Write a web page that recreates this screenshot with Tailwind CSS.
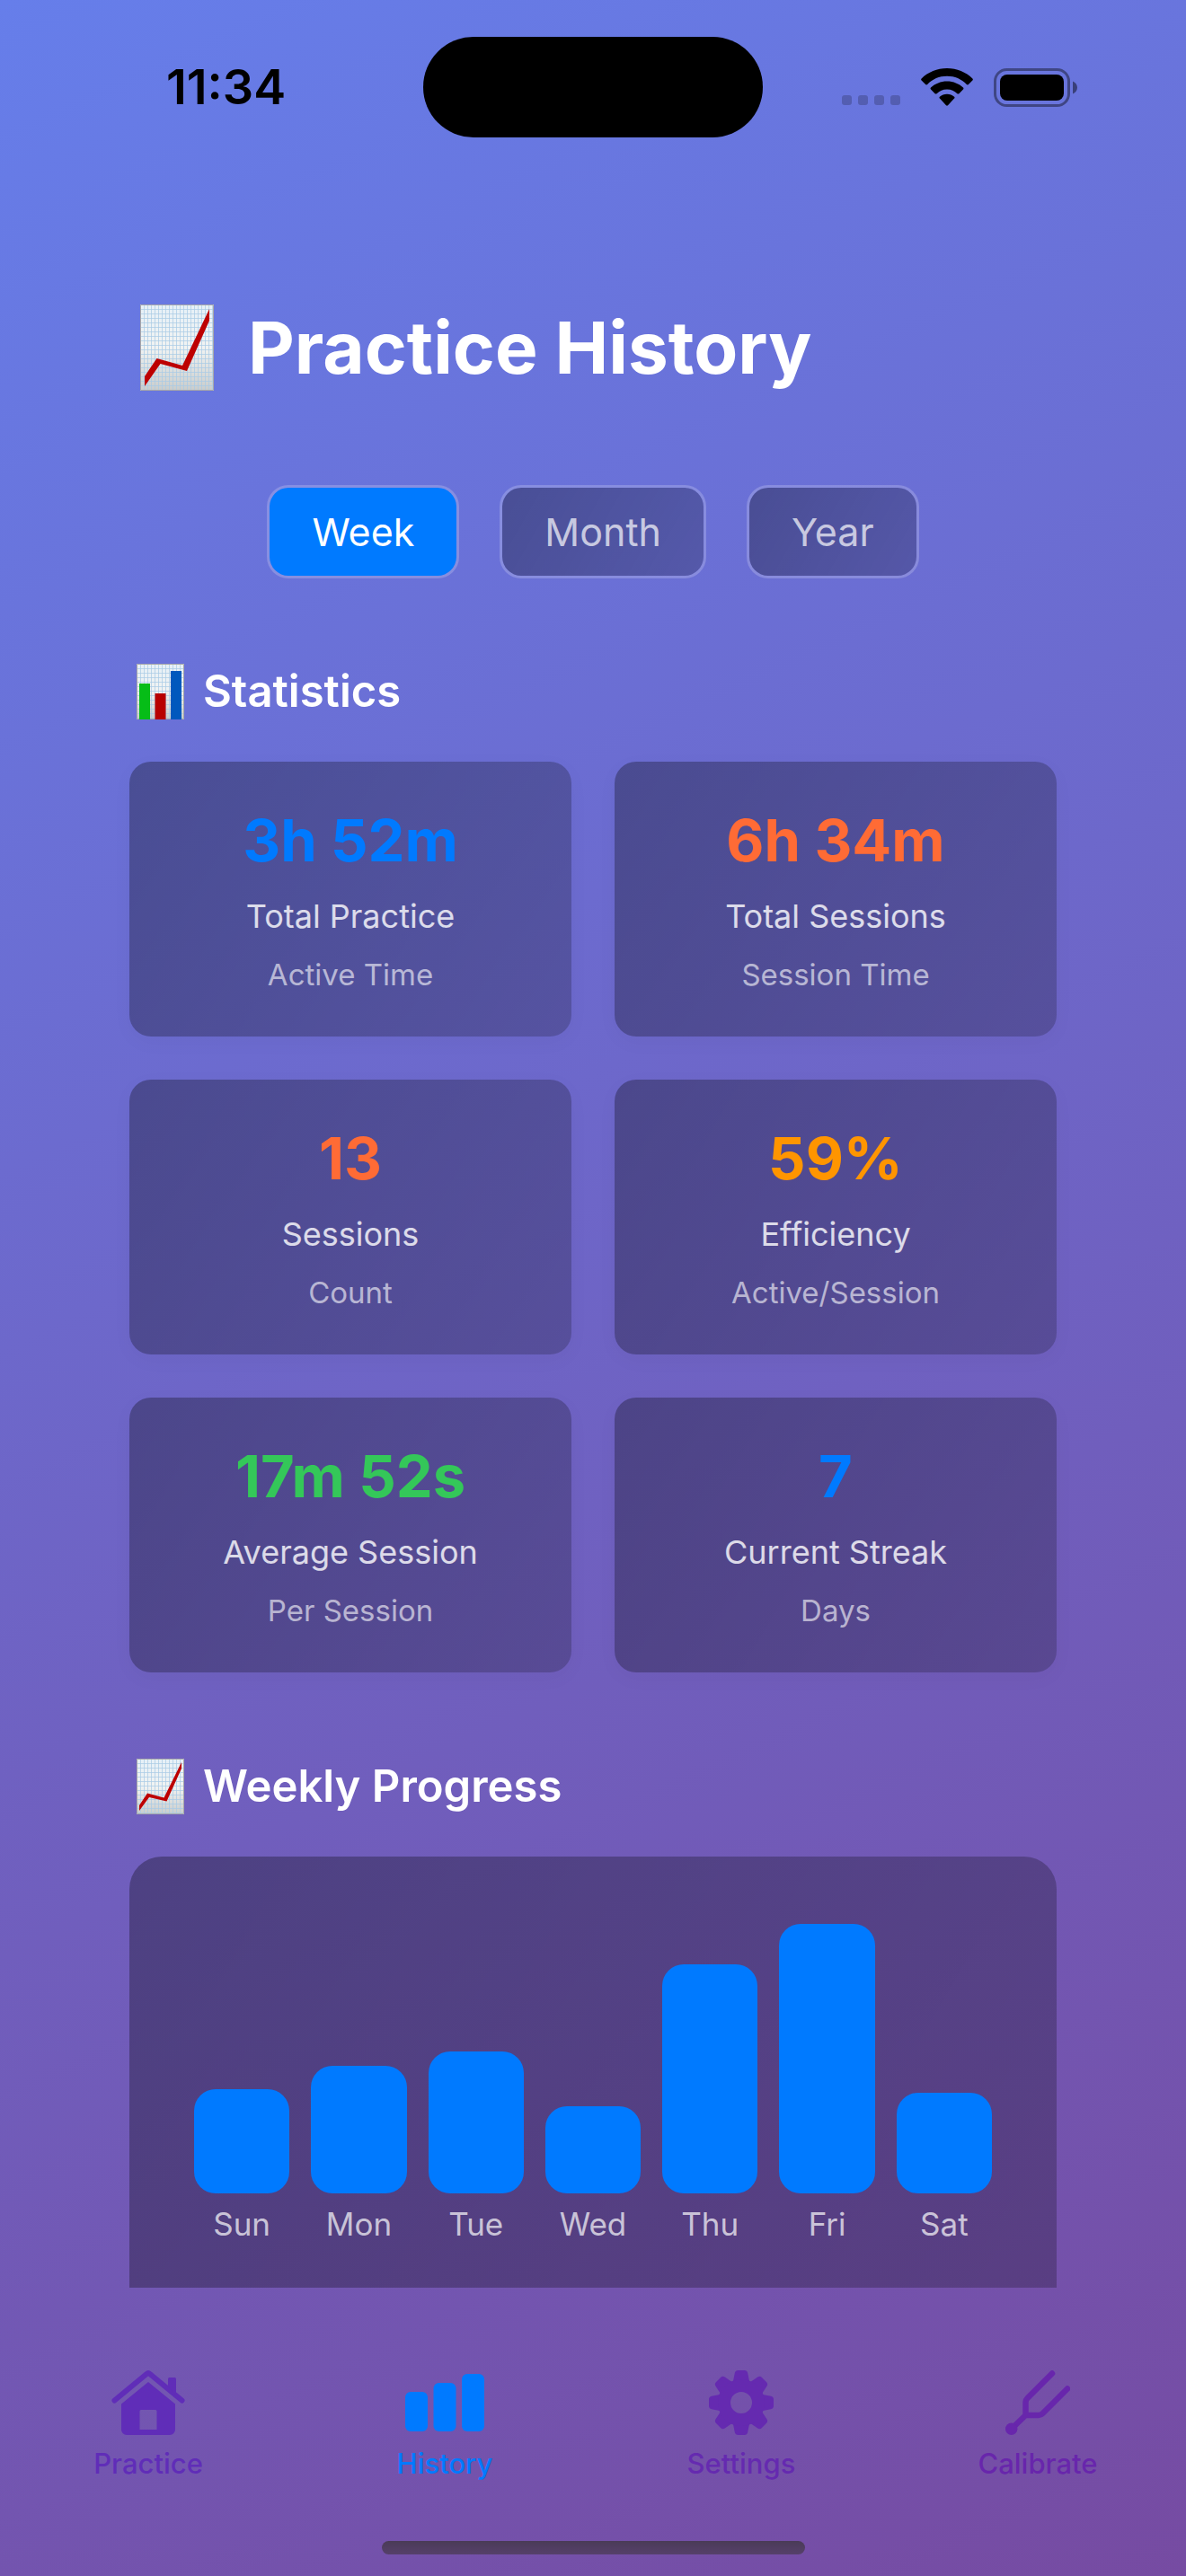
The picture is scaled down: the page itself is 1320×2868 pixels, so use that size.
<!DOCTYPE html>
<html lang="en">
<head>
<meta charset="utf-8">
<meta name="viewport" content="width=device-width, initial-scale=1">
<title>Practice History</title>
<script src="https://cdn.jsdelivr.net/npm/@tailwindcss/browser@4"></script>
</head>
<body class="font-['Inter',sans-serif] text-white">
<div class="flex min-h-screen flex-col bg-[linear-gradient(155deg,#667eea,#764ba2)]">

  <!-- Status bar -->
  <header class="grid h-[204px] grid-cols-[1fr_auto_1fr] items-start pt-[41px] text-black">
    <div class="flex h-[112px] items-center justify-center pl-8 text-[54px] leading-[64px] font-semibold">11:34</div>
    <div class="h-[112px] w-[378px] rounded-full bg-black"></div>
    <div class="flex h-[112px] items-center justify-end gap-[23px] pr-[121px]">
      <div class="flex gap-[7px] pt-7">
        <span class="size-[11px] rounded-[3px] bg-black/20"></span>
        <span class="size-[11px] rounded-[3px] bg-black/20"></span>
        <span class="size-[11px] rounded-[3px] bg-black/20"></span>
        <span class="size-[11px] rounded-[3px] bg-black/20"></span>
      </div>
      <svg class="h-[42px] w-[58px]" viewBox="0 0 58 42" aria-label="Wi-Fi">
        <path d="M29 0C40 0 50 4.300 57.400 11.400c.6.6.6 1.400 0 2l-4.500 4.600c-.5.600-1.400.6-2 0C45 12 37.800 8.800 29 8.800S13 12 7.100 18c-.6.6-1.500.6-2 0L.6 13.400c-.6-.6-.6-1.400 0-2C8 4.300 18 0 29 0z"/>
        <path d="M29 14.500c7 0 13.300 2.700 18 7 .6.6.6 1.400 0 2l-4.600 4.700c-.6.5-1.400.5-2 0-3.200-3-6.700-4.700-11.400-4.700S20.800 25.200 17.600 28.200c-.6.5-1.400.5-2 0L11 23.500c-.6-.6-.6-1.400 0-2 4.700-4.300 11-7 18-7z"/>
        <path d="M29 28.700c3.100 0 5.900 1.100 8.100 3 .6.5.6 1.300 0 1.900L30 41.200c-.6.6-1.400.6-2 0L20.900 33.600c-.6-.6-.6-1.400 0-1.900 2.200-1.900 5-3 8.100-3z"/>
      </svg>
      <svg class="h-[43px] w-[93px]" viewBox="0 0 93 43" aria-label="Battery">
        <rect x="1.500" y="1.500" width="82" height="40" rx="13" fill="none" stroke="#000" stroke-opacity=".4" stroke-width="3"/>
        <rect x="7" y="7" width="71" height="29" rx="8"/>
        <path d="M88 14.500c3 1.200 5 4 5 7s-2 5.800-5 7z" fill-opacity=".45"/>
      </svg>
    </div>
  </header>

  <main class="flex flex-col px-36">
    <h1 class="mt-[123px] flex items-center gap-[38px] pl-3 text-[80px] leading-[120px] font-bold">
      <svg class="h-[96px] w-[82px] shrink-0" viewBox="0 0 82 96" aria-hidden="true">
        <defs>
          <linearGradient id="paper" x1="0" y1="0" x2="0" y2="1"><stop offset="0" stop-color="#e6f0f7"/><stop offset=".5" stop-color="#f1f3f2"/><stop offset="1" stop-color="#c9cccb"/></linearGradient>
          <pattern id="grid" width="4" height="5" patternUnits="userSpaceOnUse"><path d="M0 .5H4M.5 0V5" stroke="#a9cbe6" stroke-width="1" stroke-opacity=".7"/></pattern>
        </defs>
        <path fill="url(#paper)" d="M0 0h82v96H0z"/><path fill="url(#grid)" stroke="#a8a8a8" d="M.5.500h81v95H.5z"/>
        <path d="M5 80 18.500 60 47 68 77 5V18L52 74 22.500 66 5 91z" fill="#bd0000"/>
      </svg>
      Practice History
    </h1>

    <div class="mt-[93px] flex justify-center gap-[45px] text-[43px] leading-[54px]" role="group" aria-label="Period">
      <button type="button" aria-pressed="true" class="h-[104px] rounded-3xl border-3 border-white/20 bg-[#007aff] bg-clip-padding px-[47px]">Week</button>
      <button type="button" aria-pressed="false" class="h-[104px] rounded-3xl border-3 border-white/20 bg-[linear-gradient(120deg,rgba(0,0,0,0.31),rgba(0,0,0,0.2))] bg-clip-padding px-[47px] text-white/70">Month</button>
      <button type="button" aria-pressed="false" class="h-[104px] rounded-3xl border-3 border-white/20 bg-[linear-gradient(120deg,rgba(0,0,0,0.31),rgba(0,0,0,0.2))] bg-clip-padding px-[47px] text-white/70">Year</button>
    </div>

    <section>
      <h2 class="mt-[95px] flex items-center gap-[21px] pl-2 text-[49px] leading-[60px] font-semibold">
        <svg class="h-[62px] w-[53px] shrink-0" viewBox="0 0 53 62" aria-hidden="true">
          <path fill="url(#paper)" d="M0 0h53v62H0z"/><path fill="url(#grid)" stroke="#a8a8a8" d="M.5.500h52v61H.5z"/>
          <path fill="#06bd17" d="M3 22h12v40H3z"/><path fill="#b80000" d="M20.500 33h12v29h-12z"/><path fill="#0058bd" d="M38 8h12v54H38z"/>
        </svg>
        Statistics
      </h2>
      <div class="mt-[47px] grid grid-cols-2 gap-12 text-center">
        <div class="h-[306px] rounded-3xl bg-[linear-gradient(120deg,rgba(0,0,0,0.31),rgba(0,0,0,0.21))] px-12 pt-12 shadow-[0_6px_24px_rgba(0,0,0,0.03)]">
          <p class="text-[65px] leading-[80px] font-bold text-[#007aff]">3h 52m</p>
          <p class="mt-[22px] text-[36px] leading-[44px] text-white/80">Total Practice</p>
          <p class="mt-[21px] text-[33px] leading-[44px] text-white/60">Active Time</p>
        </div>
        <div class="h-[306px] rounded-3xl bg-[linear-gradient(120deg,rgba(0,0,0,0.31),rgba(0,0,0,0.21))] px-12 pt-12 shadow-[0_6px_24px_rgba(0,0,0,0.03)]">
          <p class="text-[65px] leading-[80px] font-bold text-[#ff6b35]">6h 34m</p>
          <p class="mt-[22px] text-[36px] leading-[44px] text-white/80">Total Sessions</p>
          <p class="mt-[21px] text-[33px] leading-[44px] text-white/60">Session Time</p>
        </div>
        <div class="h-[306px] rounded-3xl bg-[linear-gradient(120deg,rgba(0,0,0,0.31),rgba(0,0,0,0.21))] px-12 pt-12 shadow-[0_6px_24px_rgba(0,0,0,0.03)]">
          <p class="text-[65px] leading-[80px] font-bold text-[#ff6b35]">13</p>
          <p class="mt-[22px] text-[36px] leading-[44px] text-white/80">Sessions</p>
          <p class="mt-[21px] text-[33px] leading-[44px] text-white/60">Count</p>
        </div>
        <div class="h-[306px] rounded-3xl bg-[linear-gradient(120deg,rgba(0,0,0,0.31),rgba(0,0,0,0.21))] px-12 pt-12 shadow-[0_6px_24px_rgba(0,0,0,0.03)]">
          <p class="text-[65px] leading-[80px] font-bold text-[#ff9500]">59%</p>
          <p class="mt-[22px] text-[36px] leading-[44px] text-white/80">Efficiency</p>
          <p class="mt-[21px] text-[33px] leading-[44px] text-white/60">Active/Session</p>
        </div>
        <div class="h-[306px] rounded-3xl bg-[linear-gradient(120deg,rgba(0,0,0,0.31),rgba(0,0,0,0.21))] px-12 pt-12 shadow-[0_6px_24px_rgba(0,0,0,0.03)]">
          <p class="text-[65px] leading-[80px] font-bold text-[#34c759]">17m 52s</p>
          <p class="mt-[22px] text-[36px] leading-[44px] text-white/80">Average Session</p>
          <p class="mt-[21px] text-[33px] leading-[44px] text-white/60">Per Session</p>
        </div>
        <div class="h-[306px] rounded-3xl bg-[linear-gradient(120deg,rgba(0,0,0,0.31),rgba(0,0,0,0.21))] px-12 pt-12 shadow-[0_6px_24px_rgba(0,0,0,0.03)]">
          <p class="text-[65px] leading-[80px] font-bold text-[#007aff]">7</p>
          <p class="mt-[22px] text-[36px] leading-[44px] text-white/80">Current Streak</p>
          <p class="mt-[21px] text-[33px] leading-[44px] text-white/60">Days</p>
        </div>
      </div>
    </section>

    <section>
      <h2 class="mt-24 flex items-center gap-[21px] pl-2 text-[49px] leading-[60px] font-semibold">
        <svg class="h-[62px] w-[53px] shrink-0" viewBox="0 0 53 62" aria-hidden="true">
          <path fill="url(#paper)" d="M0 0h53v62H0z"/><path fill="url(#grid)" stroke="#a8a8a8" d="M.5.500h52v61H.5z"/>
          <path d="M3 52 12 38.500 30.500 43.500 50 4V11L33.500 47.500 14 43 3 58z" fill="#bd0000"/>
        </svg>
        Weekly Progress
      </h2>
      <div class="mt-[47px] flex h-[480px] items-start gap-6 rounded-t-[36px] bg-[linear-gradient(120deg,rgba(0,0,0,0.31),rgba(0,0,0,0.23))] px-[72px] pt-[75px] text-center text-[35px] leading-[44px] text-white/70">
        <div class="flex-1"><div class="flex h-[300px] items-end"><div class="w-full rounded-3xl bg-[#007aff]" style="height:116px"></div></div><p class="mt-3">Sun</p></div>
        <div class="flex-1"><div class="flex h-[300px] items-end"><div class="w-full rounded-3xl bg-[#007aff]" style="height:142px"></div></div><p class="mt-3">Mon</p></div>
        <div class="flex-1"><div class="flex h-[300px] items-end"><div class="w-full rounded-3xl bg-[#007aff]" style="height:158px"></div></div><p class="mt-3">Tue</p></div>
        <div class="flex-1"><div class="flex h-[300px] items-end"><div class="w-full rounded-3xl bg-[#007aff]" style="height:97px"></div></div><p class="mt-3">Wed</p></div>
        <div class="flex-1"><div class="flex h-[300px] items-end"><div class="w-full rounded-3xl bg-[#007aff]" style="height:255px"></div></div><p class="mt-3">Thu</p></div>
        <div class="flex-1"><div class="flex h-[300px] items-end"><div class="w-full rounded-3xl bg-[#007aff]" style="height:300px"></div></div><p class="mt-3">Fri</p></div>
        <div class="flex-1"><div class="flex h-[300px] items-end"><div class="w-full rounded-3xl bg-[#007aff]" style="height:112px"></div></div><p class="mt-3">Sat</p></div>
      </div>
    </section>
  </main>

  <!-- Tab bar -->
  <nav class="mt-auto pt-[92px]">
    <div class="flex text-[31px] leading-[36px] font-medium">
      <a href="#" class="flex flex-1 flex-col items-center gap-[14px] text-[#602db8]">
        <svg class="h-[72px] w-[82px]" viewBox="0 0 82 72" fill="currentColor" aria-hidden="true">
          <path d="M41 13 71 37.500V66a6 6 0 0 1-6 6H17a6 6 0 0 1-6-6V37.500zM33 44a1.500 1.500 0 0 0-1.500 1.500V66h19V45.500A1.500 1.500 0 0 0 49 44z" fill-rule="evenodd"/>
          <path d="M3.500 33.500 39.500 3.800q1.500-1.300 3 0l36 29.700" fill="none" stroke="currentColor" stroke-width="6" stroke-linecap="round"/>
          <path d="M63 18V9.500Q63 8 64.500 8h6Q72 8 72 9.500V28z"/>
        </svg>
        Practice
      </a>
      <a href="#" aria-current="page" class="flex flex-1 flex-col items-center gap-[14px] text-[#007aff]">
        <svg class="h-[72px] w-[88px]" viewBox="0 0 88 72" fill="currentColor" aria-hidden="true">
          <rect y="24" width="25" height="44" rx="6"/><rect x="31.500" y="14" width="25" height="54" rx="6"/><rect x="63" y="4" width="25" height="64" rx="6"/>
        </svg>
        History
      </a>
      <a href="#" class="flex flex-1 flex-col items-center gap-[14px] text-[#652ab0]">
        <svg class="size-[72px]" viewBox="0 0 72 72" aria-hidden="true">
          <defs><path id="tooth" d="M32.500 0h7q3 0 3.700 3L45 12H27l1.800-9Q29.500 0 32.500 0z"/></defs>
          <g fill="currentColor">
            <use href="#tooth"/><use href="#tooth" transform="rotate(45 36 36)"/><use href="#tooth" transform="rotate(90 36 36)"/><use href="#tooth" transform="rotate(135 36 36)"/><use href="#tooth" transform="rotate(180 36 36)"/><use href="#tooth" transform="rotate(225 36 36)"/><use href="#tooth" transform="rotate(270 36 36)"/><use href="#tooth" transform="rotate(315 36 36)"/>
          </g>
          <circle cx="36" cy="36" r="19" fill="none" stroke="currentColor" stroke-width="14"/>
        </svg>
        Settings
      </a>
      <a href="#" class="flex flex-1 flex-col items-center gap-[14px] text-[#6826ac]">
        <svg class="size-[72px]" viewBox="0 0 72 72" fill="none" stroke="currentColor" stroke-width="6.500" stroke-linecap="round" stroke-linejoin="round" aria-hidden="true">
          <path d="M52 3.500 24.500 31q-2 2-2 4.500V50H37q2.500 0 4.500-2L69 20.500M22.500 50 8 64"/>
          <circle cx="6.700" cy="65.300" r="6.700" fill="currentColor" stroke="none"/>
        </svg>
        Calibrate
      </a>
    </div>
    <div class="mx-auto mt-[68px] mb-6 h-[15px] w-[471px] rounded-full bg-linear-to-b from-[#4a3b57] to-[#56406b]"></div>
  </nav>
</div>
</body>
</html>
